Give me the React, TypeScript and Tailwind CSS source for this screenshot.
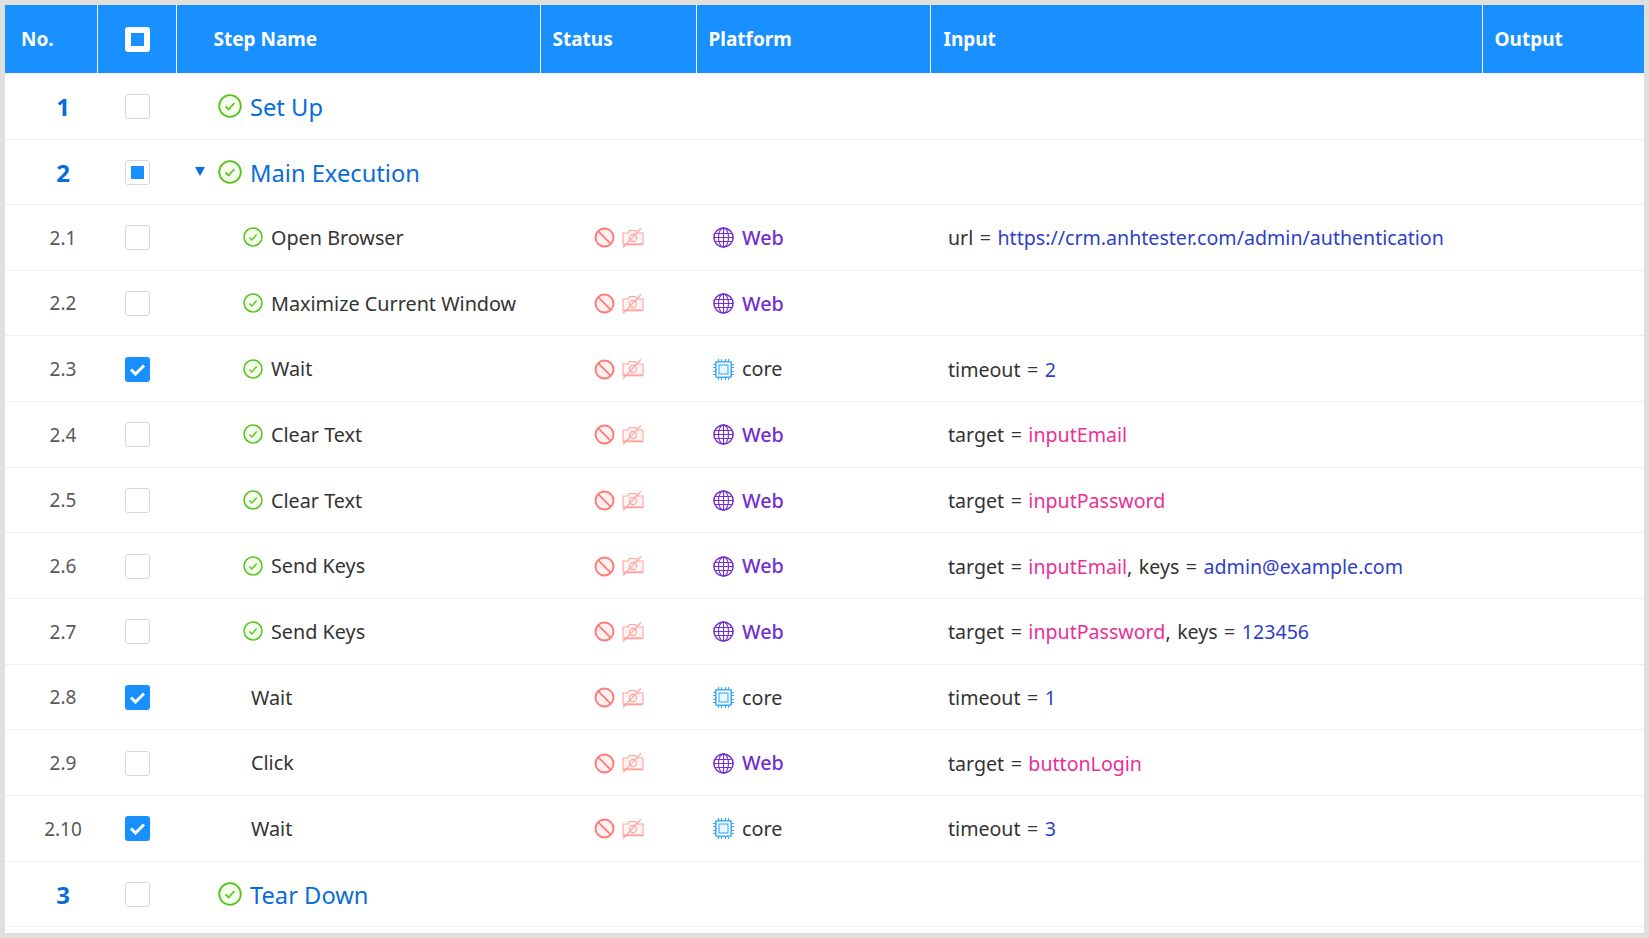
const FONT = 'font-["Noto_Sans",sans-serif]';

function CheckIcon({ size }: { size: number }) {
  return (
    <svg width={size} height={size} viewBox="0 0 24 24" className="shrink-0">
      <circle cx="12" cy="12" r="10.8" fill="#f6ffed" stroke="#52c41a" strokeWidth="1.8" />
      <path d="M7.6 12.4l3 3.2 5.8-6.6" fill="none" stroke="#52c41a" strokeWidth="1.6" />
    </svg>
  );
}

function StopIcon() {
  return (
    <svg width="21" height="21" viewBox="0 0 21 21" className="shrink-0">
      <circle cx="10.5" cy="10.5" r="9" fill="#fff1f0" stroke="#ff7875" strokeWidth="1.9" />
      <path d="M4.4 4.4l12.2 12.2" stroke="#ff7875" strokeWidth="1.7" />
    </svg>
  );
}

function CameraOffIcon() {
  return (
    <svg width="22" height="20" viewBox="0 0 22 20" className="shrink-0" fill="none" stroke="#ffa39e" strokeWidth="1.1">
      <path d="M1 5h5l1.5-2.5h6L15 5h6v11H1z" fill="#fff5f4" />
      <circle cx="11" cy="10" r="3.6" />
      <path d="M1 16.5h20" strokeWidth="1.6" />
      <path d="M1 19.5L19 .5" />
    </svg>
  );
}

function GlobeIcon() {
  return (
    <svg width="21" height="21" viewBox="0 0 21 21" className="shrink-0" fill="none" stroke="#722ed1" strokeWidth="1.1">
      <circle cx="10.5" cy="10.5" r="9.6" strokeWidth="1.5" />
      <ellipse cx="10.5" cy="10.5" rx="5" ry="9.6" />
      <path d="M10.5 1v19M1 10.5h19M2.4 6.5h16.2M2.4 14.5h16.2" />
    </svg>
  );
}

function ChipIcon() {
  return (
    <svg width="21" height="21" viewBox="0 0 21 21" className="shrink-0" fill="none" stroke="#40a9ff">
      <rect x="2.8" y="2.8" width="15.4" height="15.4" rx="1" strokeWidth="1.6" fill="#fff" />
      <rect x="6" y="6" width="9" height="9" fill="#e6f7ff" strokeWidth="1.1" />
      <path d="M5.5 0v3M8.5 0v3M12.5 0v3M15.5 0v3M5.5 18v3M8.5 18v3M12.5 18v3M15.5 18v3M0 5.5h3M0 8.5h3M0 12.5h3M0 15.5h3M18 5.5h3M18 8.5h3M18 12.5h3M18 15.5h3" strokeWidth="1.2" />
    </svg>
  );
}

function Box({ state }: { state?: 'checked' | 'partial' }) {
  if (state === 'checked') {
    return (
      <span className="flex h-[25px] w-[25px] items-center justify-center rounded-[3px] bg-[#1890ff]">
        <svg width="17" height="13" viewBox="0 0 17 13" fill="none" stroke="#fff" strokeWidth="3">
          <path d="M2 6.5l4.5 4.5L15 2.5" />
        </svg>
      </span>
    );
  }
  return (
    <span className="flex h-[25px] w-[25px] items-center justify-center rounded-[3px] border border-[#d9d9d9] bg-white">
      {state === 'partial' && <span className="h-[13px] w-[13px] bg-[#1890ff]" />}
    </span>
  );
}

type Part = { text: string; kind?: 'key' | 'value' | 'target' };

function InputText({ parts }: { parts: Part[] }) {
  return (
    <>
      {parts.map((p, i) => (
        <span
          key={i}
          className={p.kind === 'value' ? 'text-[#2f3fc9]' : p.kind === 'target' ? 'text-[#eb2f96]' : 'text-[#333333]'}
        >
          {p.text}
        </span>
      ))}
    </>
  );
}

const key = (k: string) => ({ text: k + ' = ' });

type Step = { no: string; name: string; done: boolean; checked?: boolean; platform: 'web' | 'core'; input: Part[] };

const steps: Step[] = [
  { no: '2.1', name: 'Open Browser', done: true, platform: 'web', input: [key('url'), { text: 'https://crm.anhtester.com/admin/authentication', kind: 'value' }] },
  { no: '2.2', name: 'Maximize Current Window', done: true, platform: 'web', input: [] },
  { no: '2.3', name: 'Wait', done: true, checked: true, platform: 'core', input: [key('timeout'), { text: '2', kind: 'value' }] },
  { no: '2.4', name: 'Clear Text', done: true, platform: 'web', input: [key('target'), { text: 'inputEmail', kind: 'target' }] },
  { no: '2.5', name: 'Clear Text', done: true, platform: 'web', input: [key('target'), { text: 'inputPassword', kind: 'target' }] },
  { no: '2.6', name: 'Send Keys', done: true, platform: 'web', input: [key('target'), { text: 'inputEmail', kind: 'target' }, { text: ', ' }, key('keys'), { text: 'admin@example.com', kind: 'value' }] },
  { no: '2.7', name: 'Send Keys', done: true, platform: 'web', input: [key('target'), { text: 'inputPassword', kind: 'target' }, { text: ', ' }, key('keys'), { text: '123456', kind: 'value' }] },
  { no: '2.8', name: 'Wait', done: false, checked: true, platform: 'core', input: [key('timeout'), { text: '1', kind: 'value' }] },
  { no: '2.9', name: 'Click', done: false, platform: 'web', input: [key('target'), { text: 'buttonLogin', kind: 'target' }] },
  { no: '2.10', name: 'Wait', done: false, checked: true, platform: 'core', input: [key('timeout'), { text: '3', kind: 'value' }] },
];

function GroupRow({ no, name, state, open, height }: { no: string; name: string; state?: 'partial'; open?: boolean; height: string }) {
  return (
    <tr className={`${height} border-b border-[#f0f0f0]`}>
      <td className="pl-[24px] pt-[2px] text-center text-[24px] font-bold text-[#096dd9]">{no}</td>
      <td className="pl-[2px] pt-[1px]">
        <div className="flex justify-center"><Box state={state} /></div>
      </td>
      <td colSpan={5}>
        <div className="relative flex items-center pl-[42px]">
          {open && (
            <span className="absolute left-[19px] top-[12px] h-0 w-0 border-x-[5px] border-t-[9px] border-x-transparent border-t-[#096dd9]" />
          )}
          <CheckIcon size={24} />
          <span className="ml-[8px] pt-[2px] text-[23.7px] leading-8 text-[#096dd9]">{name}</span>
        </div>
      </td>
    </tr>
  );
}

function StepRow({ step }: { step: Step }) {
  return (
    <tr className="h-[65.66px] border-b border-[#f0f0f0] text-[19.8px] text-[#333333]">
      <td className="pl-[24px] pt-[1px] text-center text-[19px] text-[#595959]">{step.no}</td>
      <td className="pl-[2px] pt-[1px]">
        <div className="flex justify-center"><Box state={step.checked ? 'checked' : undefined} /></div>
      </td>
      <td>
        {step.done ? (
          <div className="flex items-center pl-[67px]">
            <CheckIcon size={20} />
            <span className="ml-[8px] pt-[1px]">{step.name}</span>
          </div>
        ) : (
          <div className="pl-[75px] pt-[1px]">{step.name}</div>
        )}
      </td>
      <td className="pt-[1px]">
        <div className="flex items-center gap-[7px] pl-[54px]">
          <StopIcon />
          <CameraOffIcon />
        </div>
      </td>
      <td className="pt-[1px]">
        <div className="flex items-center gap-[8px] pl-[17px]">
          {step.platform === 'web' ? <GlobeIcon /> : <ChipIcon />}
          <span className={step.platform === 'web' ? 'font-medium text-[#722ed1]' : ''}>
            {step.platform === 'web' ? 'Web' : 'core'}
          </span>
        </div>
      </td>
      <td className="pl-[18px] pt-[1px] text-[19.6px] whitespace-pre [word-spacing:1.4px]">
        <InputText parts={step.input} />
      </td>
      <td />
    </tr>
  );
}

const thClass = 'border-r border-white px-[12px] text-left text-[19px] font-bold text-white';

export default function App() {
  return (
    <div className={`min-h-[938px] bg-[#e0dfdd] p-[5px] ${FONT}`}>
      <div className="h-[928px] bg-white">
        <table className="w-[1639px] table-fixed border-collapse">
          <colgroup>
            <col className="w-[92px]" />
            <col className="w-[79px]" />
            <col className="w-[364px]" />
            <col className="w-[156px]" />
            <col className="w-[234px]" />
            <col className="w-[552px]" />
            <col className="w-[162px]" />
          </colgroup>
          <thead>
            <tr className="h-[68px] bg-[#1890ff]">
              <th className={`${thClass} pl-[16px]`}>No.</th>
              <th className={`${thClass} pl-[14px]`}>
                <div className="flex justify-center">
                  <span className="flex h-[25px] w-[25px] items-center justify-center rounded-[3px] bg-white">
                    <span className="h-[13px] w-[13px] bg-[#1890ff]" />
                  </span>
                </div>
              </th>
              <th className={`${thClass} pl-[37px]`}>Step Name</th>
              <th className={thClass}>Status</th>
              <th className={thClass}>Platform</th>
              <th className={`${thClass} pl-[13px]`}>Input</th>
              <th className={`${thClass} border-r-0`}>Output</th>
            </tr>
          </thead>
          <tbody>
            <GroupRow no="1" name="Set Up" height="h-[66px]" />
            <GroupRow no="2" name="Main Execution" state="partial" open height="h-[65.66px]" />
            {steps.map((s) => (
              <StepRow key={s.no} step={s} />
            ))}
            <GroupRow no="3" name="Tear Down" height="h-[65.3px]" />
          </tbody>
        </table>
      </div>
    </div>
  );
}
